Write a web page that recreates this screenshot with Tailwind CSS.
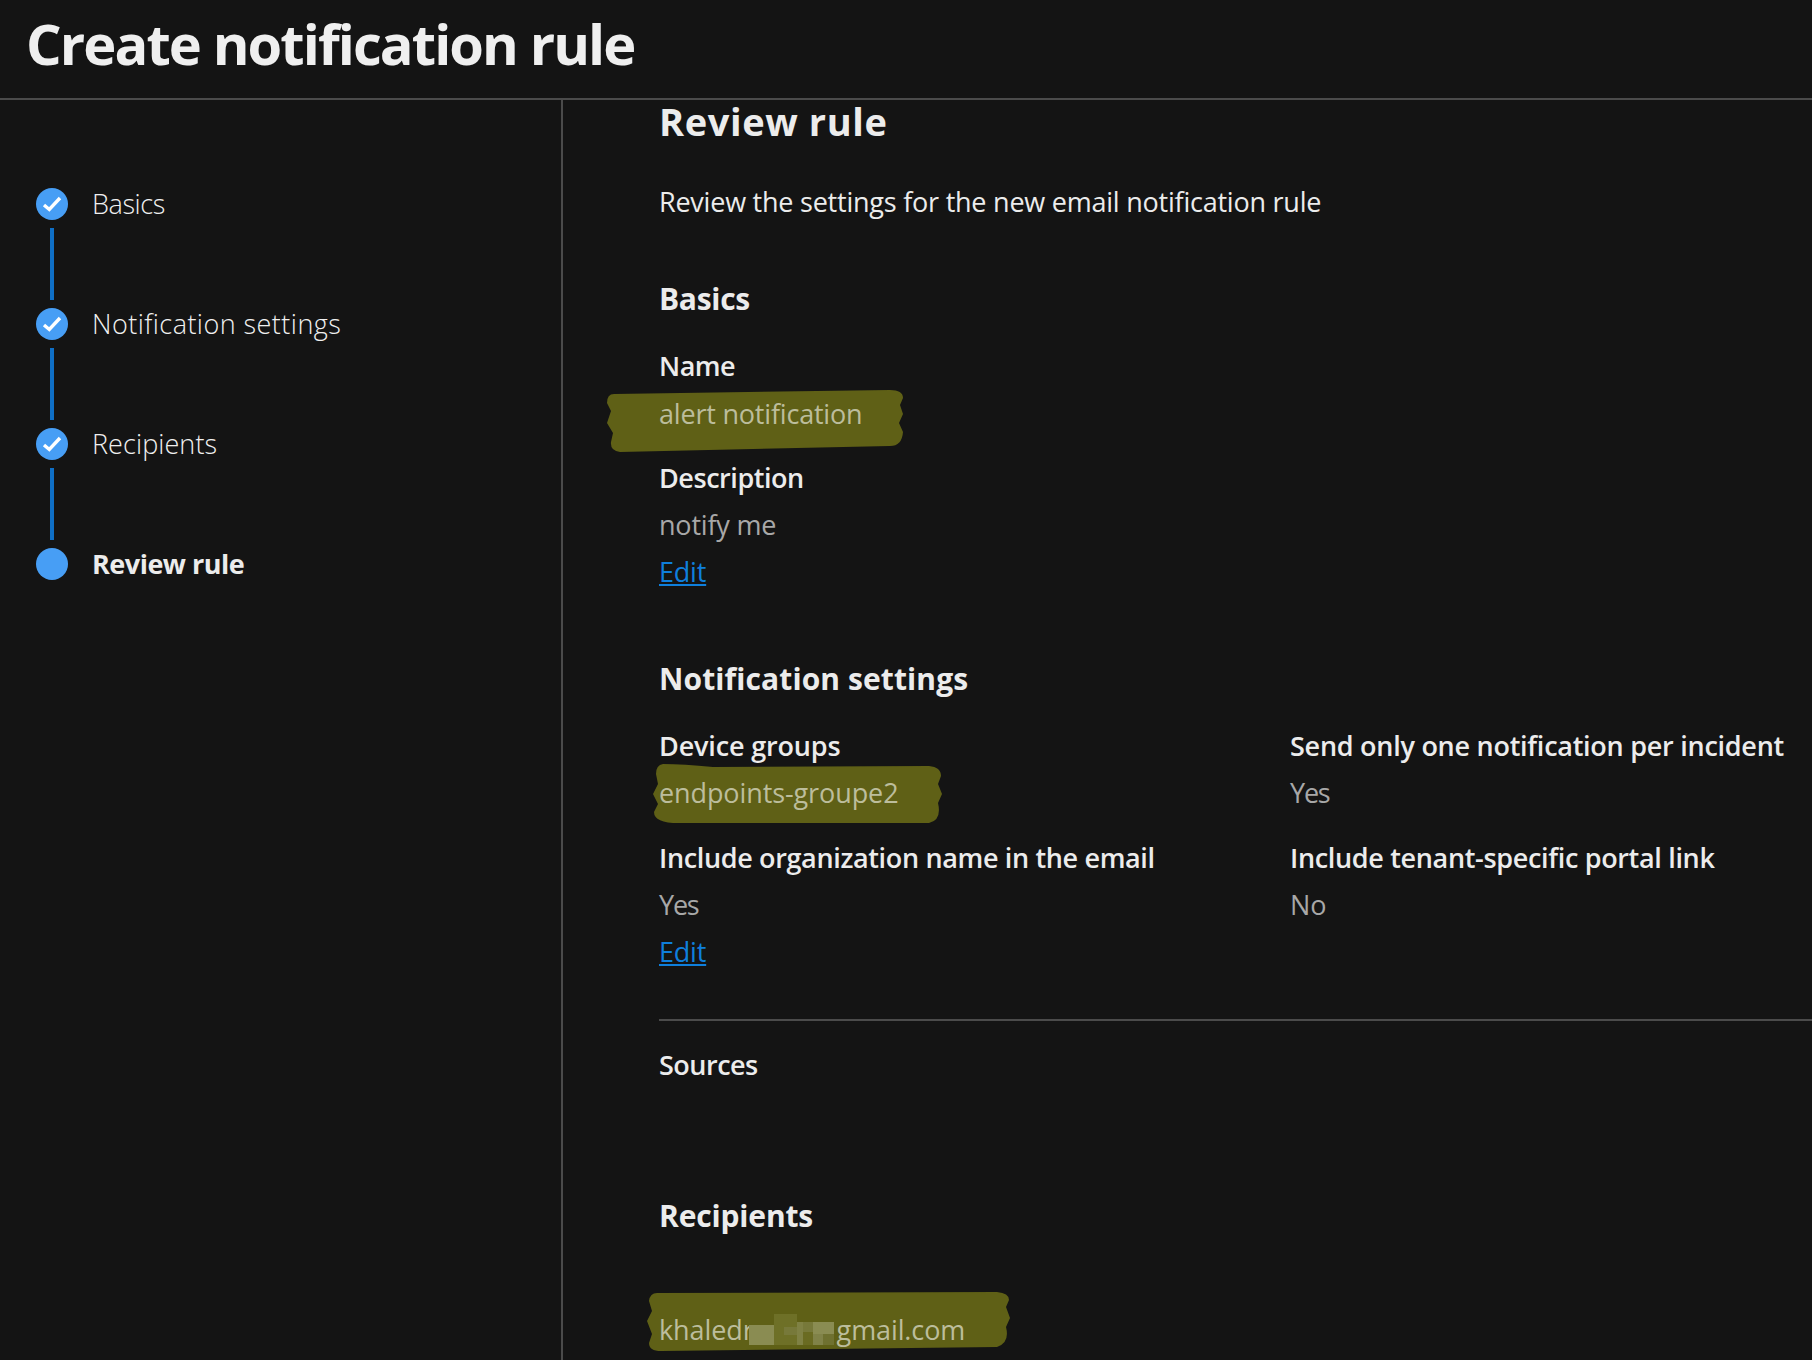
<!DOCTYPE html>
<html>
<head>
  <title>Create notification rule</title>
  <script src="https://cdn.jsdelivr.net/npm/@tailwindcss/browser@4"></script>
</head>

<body class="bg-[#141414] font-['Open_Sans',sans-serif] text-[#ececec] h-[1360px] overflow-hidden">

  <header class="h-[100px] border-b-2 border-[#4b4b4b] pl-[26px]">
    <h1 class="h-[86px] leading-[86px] text-[56px] font-bold text-[#efefef] tracking-[-1.9px] whitespace-nowrap">Create notification rule</h1>
  </header>

  <div class="flex h-[1260px]">
    <!-- Steps -->
    <aside class="w-[563px] shrink-0 border-r-2 border-[#4b4b4b] pt-[88px] pl-[36px]">
      <div class="flex items-center gap-[24px] h-[32px]">
        <span class="w-[32px] h-[32px] rounded-full bg-[#479ef5]">
          <svg width="32" height="32" viewBox="0 0 32 32" fill="none"><path d="M8 17l5.3 4.5L24 10" stroke="#fff" stroke-width="3.4"/></svg>
        </span>
        <span class="text-[27px] font-light text-[#f0f0f0] tracking-[-0.4px]">Basics</span>
      </div>
      <div class="w-[4px] h-[72px] bg-[#0f6fc6] my-[8px] ml-[14px]"></div>
      <div class="flex items-center gap-[24px] h-[32px]">
        <span class="w-[32px] h-[32px] rounded-full bg-[#479ef5]">
          <svg width="32" height="32" viewBox="0 0 32 32" fill="none"><path d="M8 17l5.3 4.5L24 10" stroke="#fff" stroke-width="3.4"/></svg>
        </span>
        <span class="text-[27px] font-light text-[#f0f0f0] tracking-[0.45px]">Notification settings</span>
      </div>
      <div class="w-[4px] h-[72px] bg-[#0f6fc6] my-[8px] ml-[14px]"></div>
      <div class="flex items-center gap-[24px] h-[32px]">
        <span class="w-[32px] h-[32px] rounded-full bg-[#479ef5]">
          <svg width="32" height="32" viewBox="0 0 32 32" fill="none"><path d="M8 17l5.3 4.5L24 10" stroke="#fff" stroke-width="3.4"/></svg>
        </span>
        <span class="text-[27px] font-light text-[#f0f0f0] tracking-[0.08px]">Recipients</span>
      </div>
      <div class="w-[4px] h-[72px] bg-[#0f6fc6] my-[8px] ml-[14px]"></div>
      <div class="flex items-center gap-[24px] h-[32px]">
        <span class="w-[32px] h-[32px] rounded-full bg-[#479ef5]"></span>
        <span class="text-[27px] font-bold tracking-[-0.5px]">Review rule</span>
      </div>
    </aside>

    <!-- Review -->
    <main class="flex-1 pl-[96px] min-w-0 whitespace-nowrap">
      <h2 class="h-[42px] leading-[42px] text-[38px] font-bold tracking-[0.6px]">Review rule</h2>
      <p class="h-[36px] leading-[36px] mt-[42px] text-[27px] tracking-[-0.23px]">Review the settings for the new email notification rule</p>

      <h3 class="h-[40px] leading-[40px] mt-[59px] text-[30px] font-bold tracking-[-0.3px]">Basics</h3>
      <div class="h-[47px] leading-[45px] mt-[24px] text-[27px] font-semibold tracking-[-0.5px]">Name</div>
      <div class="relative h-[47px] leading-[47px] text-[27px] text-[#bcbd9c] tracking-[-0.2px]">
        <svg class="absolute left-[-53px] top-[-1px]" width="298" height="64" viewBox="0 0 298 64"><path fill="#5f6016" d="M8 5 L284 1 Q297 1 297 9 L294 16 L297 25 L293 34 L297 43 Q296 57 284 57 L14 63 Q4 62 5 53 L7 44 L1 34 L5 22 L1 14 Q1 5 8 5Z"/></svg>
        <span class="relative">alert notification</span>
      </div>
      <div class="h-[47px] leading-[47px] mt-[17px] text-[27px] font-semibold tracking-[-0.45px]">Description</div>
      <div class="h-[47px] leading-[47px] text-[27px] text-[#a8a8a8] tracking-[-0.2px]">notify me</div>
      <a class="block w-fit h-[47px] leading-[47px] text-[27px] text-[#0f7fdc] underline tracking-[-0.2px]">Edit</a>

      <h3 class="h-[40px] leading-[40px] mt-[64px] text-[30px] font-bold tracking-[0.1px]">Notification settings</h3>
      <div class="grid grid-cols-[631px_1fr] mt-[23px] gap-y-[18px] text-[27px]">
        <div>
          <div class="h-[47px] leading-[47px] font-semibold tracking-[-0.15px]">Device groups</div>
          <div class="relative h-[47px] leading-[47px] text-[#bcbd9c] tracking-[-0.1px]">
            <svg class="absolute left-[-6px] top-[-5px]" width="290" height="60" viewBox="0 0 290 60"><path fill="#5f6016" d="M10 0 Q30 0 60 3 L276 2 Q288 3 288 12 L285 20 L289 30 L285 39 Q289 56 276 59 L30 59 Q1 60 1 48 L5 40 L0 30 L5 20 L3 10 Q3 1 10 0Z"/></svg>
            <span class="relative">endpoints-groupe2</span>
          </div>
        </div>
        <div>
          <div class="h-[47px] leading-[47px] font-semibold tracking-[-0.26px]">Send only one notification per incident</div>
          <div class="h-[47px] leading-[47px] text-[#a8a8a8] tracking-[-1.2px]">Yes</div>
        </div>
        <div>
          <div class="h-[47px] leading-[47px] font-semibold tracking-[-0.35px]">Include organization name in the email</div>
          <div class="h-[47px] leading-[47px] text-[#a8a8a8] tracking-[-1.2px]">Yes</div>
          <a class="block w-fit h-[47px] leading-[47px] text-[#0f7fdc] underline tracking-[-0.2px]">Edit</a>
        </div>
        <div>
          <div class="h-[47px] leading-[47px] font-semibold tracking-[-0.33px]">Include tenant-specific portal link</div>
          <div class="h-[47px] leading-[47px] text-[#a8a8a8] tracking-[-0.2px]">No</div>
        </div>
      </div>

      <hr class="mt-[44px] border-t-2 border-[#4b4b4b]">
      <div class="h-[47px] leading-[47px] mt-[20px] text-[27px] font-semibold tracking-[-0.5px]">Sources</div>

      <h3 class="h-[40px] leading-[40px] mt-[108px] text-[30px] font-bold tracking-[-0.15px]">Recipients</h3>
      <div class="relative h-[47px] leading-[47px] mt-[70px] text-[27px] text-[#bcbd9c] tracking-[-0.1px]">
        <svg class="absolute left-[-12px] top-[-15px]" width="364" height="62" viewBox="0 0 364 62"><path fill="#5f6016" d="M10 2 L350 1 Q362 2 362 9 L359 16 L363 27 L359 36 Q363 52 350 56 L14 60 Q2 60 2 52 L5 43 L0 30 L5 20 L2 10 Q3 2 10 2Z"/></svg>
        <span class="relative">khaledr</span><span class="relative inline-block w-[83px] h-[20px] align-middle"></span><span class="relative">gmail.com</span>
        <!-- redacted part of the address -->
        <div class="absolute left-[90px] top-[8px] w-[85px] h-[31px]">
          <div class="absolute left-0 top-[11px] w-[25px] h-[20px] bg-[#8a8c52]"></div>
          <div class="absolute left-[25px] top-0 w-[23px] h-[11px] bg-[#6e7027]"></div>
          <div class="absolute left-[25px] top-[11px] w-[23px] h-[20px] bg-[#6e7027]"></div>
          <div class="absolute left-[35px] top-[13px] w-[13px] h-[8px] bg-[#77793a]"></div>
          <div class="absolute left-[48px] top-[8px] w-[6px] h-[23px] bg-[#7f8144]"></div>
          <div class="absolute left-[54px] top-[8px] w-[10px] h-[10px] bg-[#77793a]"></div>
          <div class="absolute left-[54px] top-[18px] w-[10px] h-[13px] bg-[#6a6b22]"></div>
          <div class="absolute left-[64px] top-[8px] w-[21px] h-[12px] bg-[#8a8c52]"></div>
          <div class="absolute left-[64px] top-[20px] w-[10px] h-[11px] bg-[#808248]"></div>
          <div class="absolute left-[74px] top-[20px] w-[11px] h-[11px] bg-[#6f7130]"></div>
        </div>
      </div>
    </main>
  </div>

</body>
</html>
